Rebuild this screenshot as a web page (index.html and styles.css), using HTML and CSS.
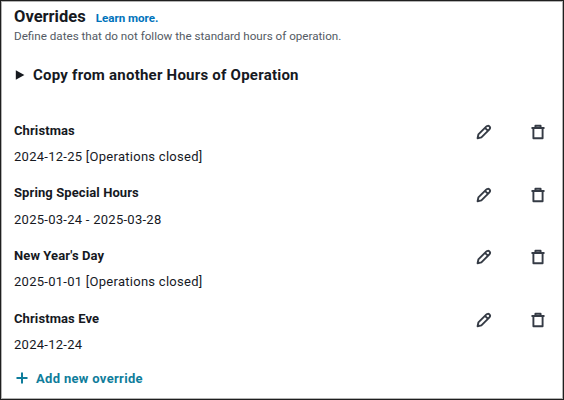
FILE: index.html
```html
<!DOCTYPE html>
<html lang="en">
<head>
<meta charset="utf-8">
<title>Overrides</title>
<link rel="stylesheet" href="styles.css">
</head>
<body>
<main class="panel">
  <header class="head">
    <div class="title-row">
      <h2 class="title">Overrides</h2>
      <a class="learn" href="#">Learn more.</a>
    </div>
    <p class="desc">Define dates that do not follow the standard hours of operation.</p>
  </header>
  <div class="copy">
    <svg class="caret" width="10" height="10" viewBox="0 0 10 10"><path d="M0.8 0.2 L9.4 5 L0.8 9.8 Z"/></svg>
    <span>Copy from another Hours of Operation</span>
  </div>
  <ul class="list">
    <li class="item">
      <div class="info"><div class="name">Christmas</div><div class="date">2024-12-25 [Operations closed]</div></div>
      <div class="actions">
        <svg class="icon" width="16" height="16" viewBox="0 0 16 16"><path d="M1.6 14.2 L2.4 10.4 L10.2 2.6 C11.2 1.6 12.6 1.6 13.4 2.4 C14.2 3.2 14.2 4.6 13.2 5.6 L5.4 13.4 Z M9 3.8 L12 6.8"/></svg>
        <svg class="icon" width="16" height="16" viewBox="0 0 16 16"><path d="M1.5 4 H14.5 M5.4 4 V1.8 H10.6 V4 M3.4 4 V14.2 H12.6 V4"/></svg>
      </div>
    </li>
    <li class="item">
      <div class="info"><div class="name">Spring Special Hours</div><div class="date">2025-03-24 - 2025-03-28</div></div>
      <div class="actions">
        <svg class="icon" width="16" height="16" viewBox="0 0 16 16"><path d="M1.6 14.2 L2.4 10.4 L10.2 2.6 C11.2 1.6 12.6 1.6 13.4 2.4 C14.2 3.2 14.2 4.6 13.2 5.6 L5.4 13.4 Z M9 3.8 L12 6.8"/></svg>
        <svg class="icon" width="16" height="16" viewBox="0 0 16 16"><path d="M1.5 4 H14.5 M5.4 4 V1.8 H10.6 V4 M3.4 4 V14.2 H12.6 V4"/></svg>
      </div>
    </li>
    <li class="item">
      <div class="info"><div class="name">New Year's Day</div><div class="date">2025-01-01 [Operations closed]</div></div>
      <div class="actions">
        <svg class="icon" width="16" height="16" viewBox="0 0 16 16"><path d="M1.6 14.2 L2.4 10.4 L10.2 2.6 C11.2 1.6 12.6 1.6 13.4 2.4 C14.2 3.2 14.2 4.6 13.2 5.6 L5.4 13.4 Z M9 3.8 L12 6.8"/></svg>
        <svg class="icon" width="16" height="16" viewBox="0 0 16 16"><path d="M1.5 4 H14.5 M5.4 4 V1.8 H10.6 V4 M3.4 4 V14.2 H12.6 V4"/></svg>
      </div>
    </li>
    <li class="item">
      <div class="info"><div class="name">Christmas Eve</div><div class="date">2024-12-24</div></div>
      <div class="actions">
        <svg class="icon" width="16" height="16" viewBox="0 0 16 16"><path d="M1.6 14.2 L2.4 10.4 L10.2 2.6 C11.2 1.6 12.6 1.6 13.4 2.4 C14.2 3.2 14.2 4.6 13.2 5.6 L5.4 13.4 Z M9 3.8 L12 6.8"/></svg>
        <svg class="icon" width="16" height="16" viewBox="0 0 16 16"><path d="M1.5 4 H14.5 M5.4 4 V1.8 H10.6 V4 M3.4 4 V14.2 H12.6 V4"/></svg>
      </div>
    </li>
  </ul>
  <a class="add" href="#">
    <svg class="plus" width="14" height="14" viewBox="0 0 14 14"><path d="M7 1.5 V12.5 M1.5 7 H12.5"/></svg>
    <span>Add new override</span>
  </a>
</main>
</body>
</html>
```
FILE: styles.css
```css
* { box-sizing: border-box; }
html, body { margin: 0; padding: 0; }
body {
  width: 564px;
  height: 400px;
  background: #fff;
  font-family: Roboto, "Noto Sans", sans-serif;
  color: #16191f;
}
.panel {
  width: 564px;
  height: 400px;
  border: 1px solid #1f1f1f;
  box-shadow: inset 0 0 0 1px rgba(0, 0, 0, 0.3);
  padding: 5px 13px 0;
  overflow: hidden;
}
.title-row { display: flex; align-items: baseline; gap: 10px; height: 22px; }
.title { margin: 0; font-size: 16.5px; line-height: 22px; font-weight: 700; }
.learn { font-size: 11.6px; font-weight: 700; color: #0073bb; text-decoration: none; }
.desc { margin: 0; font-size: 11.65px; line-height: 16px; color: #545b64; }
.copy {
  display: flex;
  align-items: center;
  gap: 8px;
  margin: 20px 0 0 1px;
  height: 22px;
  font-size: 15px;
  font-weight: 700;
  letter-spacing: 0.23px;
}
.caret { fill: #16191f; }
.list { list-style: none; margin: 35.5px 0 0; padding: 0; }
.item { display: flex; justify-content: space-between; height: 62.7px; }
.name { font-size: 13px; line-height: 18px; font-weight: 700; letter-spacing: 0.1px; }
.date { margin-top: 8.5px; font-size: 13px; line-height: 18px; letter-spacing: 0.27px; color: #16191f; }
.actions { display: flex; gap: 38px; padding: 2.5px 4px 0 0; }
.icon { fill: none; stroke: #353b45; stroke-width: 1.9; stroke-linejoin: round; }
.add {
  display: flex;
  align-items: center;
  gap: 7px;
  margin: -1.5px 0 0 1px;
  font-size: 13px;
  font-weight: 700;
  letter-spacing: 0.32px;
  color: #0f7d9b;
  text-decoration: none;
}
.plus { fill: none; stroke: #0f7d9b; stroke-width: 2; }
```
